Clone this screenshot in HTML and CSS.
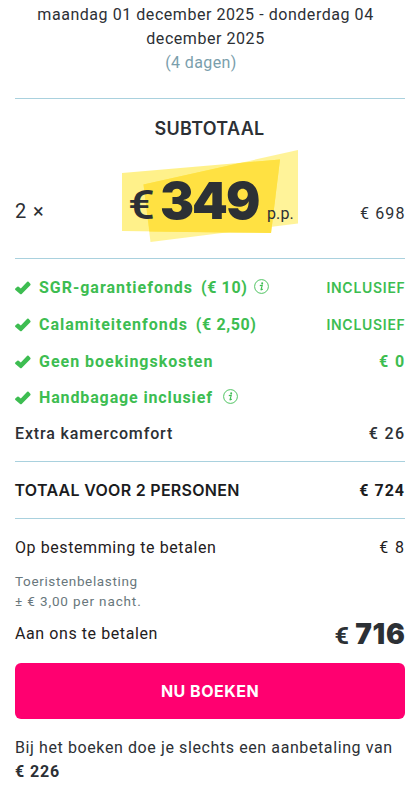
FILE: index.html
```html
<!DOCTYPE html>
<html lang="nl">
<head>
<meta charset="utf-8">
<title>Prijsoverzicht</title>
<link rel="stylesheet" href="styles.css">
</head>
<body>
<svg class="defs" width="0" height="0" aria-hidden="true">
  <symbol id="check" viewBox="0 0 16 14"><path d="M0.3 7.6 L2.3 5.7 Q3 5.2 3.7 5.7 L5.8 7.5 L12.2 0.8 Q12.9 0.2 13.6 0.8 L15.3 2.8 Q15.9 3.5 15.3 4.2 L6.7 12.9 Q5.9 13.6 5.1 12.9 L0.4 9 Q-0.2 8.3 0.3 7.6Z" fill="currentColor"/></symbol>
  <symbol id="info" viewBox="0 0 15 15"><circle cx="7.5" cy="7.5" r="6.9" fill="none" stroke="currentColor" stroke-width="0.9"/><circle cx="8.2" cy="4.2" r="1" fill="currentColor"/><path d="M5.8 6.6 L8.3 6.2 L7 10.7 Q6.9 11.3 8.8 10" fill="none" stroke="currentColor" stroke-width="1.1"/></symbol>
</svg>
<main class="summary">
  <header class="dates">
    <p class="period">maandag 01 december 2025 - donderdag 04 december 2025</p>
    <p class="days">(4 dagen)</p>
  </header>
  <section class="subtotal">
    <h2 class="subtotal-title">SUBTOTAAL</h2>
    <div class="subtotal-row">
      <span class="count">2 ×</span>
      <div class="price">
        <svg class="swash" viewBox="0 0 176 92" aria-hidden="true"><path d="M0 23 L158 9.5 L149 83 L0 81Z" fill="#ffe100" fill-opacity=".46"/><path d="M21.5 34.5 L176 0 V73.5 L28.5 92Z" fill="#ffe100" fill-opacity=".4"/><path d="M21.5 34.5 L118 13 L158 9.5 L149 83 L101 82.5 L27.5 81.5Z" fill="#ffe142"/></svg>
        <span class="euro">€</span><span class="amount">349</span><span class="pp">p.p.</span>
      </div>
      <span class="sum">€ 698</span>
    </div>
  </section>
  <section class="extras">
    <div class="line green"><svg class="check"><use href="#check"/></svg><span class="name">SGR-garantiefonds<span class="fee">(€ 10)</span></span><svg class="info"><use href="#info"/></svg><span class="value small">INCLUSIEF</span></div>
    <div class="line green"><svg class="check"><use href="#check"/></svg><span class="name">Calamiteitenfonds<span class="fee">(€ 2,50)</span></span><span class="value small">INCLUSIEF</span></div>
    <div class="line green"><svg class="check"><use href="#check"/></svg><span class="name">Geen boekingskosten</span><span class="value">€ 0</span></div>
    <div class="line green last"><svg class="check"><use href="#check"/></svg><span class="name">Handbagage inclusief</span><svg class="info"><use href="#info"/></svg></div>
    <div class="line medium"><span>Extra kamercomfort</span><span class="value">€ 26</span></div>
  </section>
  <section class="total"><span class="total-name">TOTAAL VOOR 2 PERSONEN</span><span class="total-value">€ 724</span></section>
  <section class="payments">
    <div class="pay"><span>Op bestemming te betalen</span><span class="value">€ 8</span></div>
    <p class="tax">Toeristenbelasting<br><span class="rate">± € 3,00 per nacht.</span></p>
    <div class="pay due"><span>Aan ons te betalen</span><span class="final"><span class="final-euro">€</span><span class="final-amount">716</span></span></div>
  </section>
  <button class="book" type="button">NU BOEKEN</button>
  <p class="deposit">Bij het boeken doe je slechts een aanbetaling van <strong>€ 226</strong></p>
</main>
</body>
</html>
```
FILE: styles.css
```css
* { box-sizing: border-box; }
body { margin: 0; background: #fff; color: #2c3035; font: 400 16px/24px Roboto, "Liberation Sans", sans-serif; letter-spacing: .55px; }
p, h2 { margin: 0; }
.defs { display: block; position: absolute; }
.summary { width: 419px; padding: 3px 14px 0 15px; }
.dates { height: 96px; padding-right: 9px; text-align: center; border-bottom: 1px solid #a9d1de; }
.period { padding: 0 10px; }
.days { color: #7a9eac; padding-right: 9px; letter-spacing: .4px; }
.subtotal { height: 160px; padding-top: 18px; border-bottom: 1px solid #a9d1de; }
.subtotal-title { font: 600 18px/24px Inter, sans-serif; letter-spacing: .3px; text-align: center; padding-right: 1px; height: 24px; }
.subtotal-row { display: flex; height: 92px; margin-top: 9px; }
.count { width: 107px; padding-top: 49px; font-size: 20px; letter-spacing: .9px; }
.price { position: relative; width: 176px; height: 92px; display: flex; align-items: baseline; padding: 22px 0 0 6px; letter-spacing: 0; }
.swash { position: absolute; left: 0; top: 0; width: 176px; height: 92px; }
.euro, .amount, .pp { position: relative; }
.euro { width: 32px; font-size: 40px; line-height: 58px; font-weight: 500; transform: scaleX(1.18); transform-origin: left; }
.amount { width: 107px; font: 900 51px/58px Inter, sans-serif; letter-spacing: -2px; }
.pp { font-size: 16px; letter-spacing: .1px; }
.sum { margin-left: auto; padding-top: 52px; letter-spacing: 1.1px; margin-right: -.5px; }
.extras { height: 203px; padding-top: 10px; border-bottom: 1px solid #a9d1de; }
.line { display: flex; align-items: center; height: 37px; }
.line.last { height: 36px; }
.line.medium { height: 36px; font-weight: 500; letter-spacing: .85px; }
.green { color: #3dbd51; font-weight: 700; letter-spacing: .98px; }
.green.last { letter-spacing: .87px; }
.fee { margin-left: 8px; letter-spacing: .6px; }
.check { width: 16px; height: 14px; margin-right: 8px; }
.info { width: 15px; height: 15px; margin: -3px 0 0 7px; }
.last .info { margin-left: 10px; }
.value { margin-left: auto; letter-spacing: 1.4px; margin-right: -.5px; }
.small { font: 600 14px/24px Inter, sans-serif; letter-spacing: .7px; margin-right: -.5px; }
.total { display: flex; justify-content: space-between; align-items: center; height: 57px; border-bottom: 1px solid #a9d1de; color: #1b1c1e; }
.total-name { font: 600 16px/24px Inter, sans-serif; letter-spacing: .29px; margin-left: -.5px; }
.total-value { font-weight: 700; letter-spacing: 1px; padding-top: 1px; }
.payments { padding-top: 17px; height: 144px; color: #1f2021; }
.pay { display: flex; align-items: center; letter-spacing: .58px; }
.tax { margin-top: 11px; font-size: 13.5px; line-height: 20px; color: #69777c; letter-spacing: .64px; }
.rate { letter-spacing: .86px; }
.due { height: 24px; margin-top: 11px; }
.final { margin-left: auto; display: flex; align-items: baseline; color: #2c3035; }
.final-euro { font-size: 23px; font-weight: 700; margin-right: 5px; transform: scaleX(1.1); transform-origin: right; }
.final-amount { font: 900 28px/30px Inter, sans-serif; letter-spacing: .7px; margin-right: -.5px; }
.book { display: block; width: 390px; height: 56px; padding: 0; border: 0; border-radius: 6px; background: #ff0070; color: #fff; font: 700 16px/24px Inter, sans-serif; letter-spacing: .5px; }
.deposit { margin-top: 17px; letter-spacing: .6px; }
.deposit strong { display: block; letter-spacing: .9px; }
```
